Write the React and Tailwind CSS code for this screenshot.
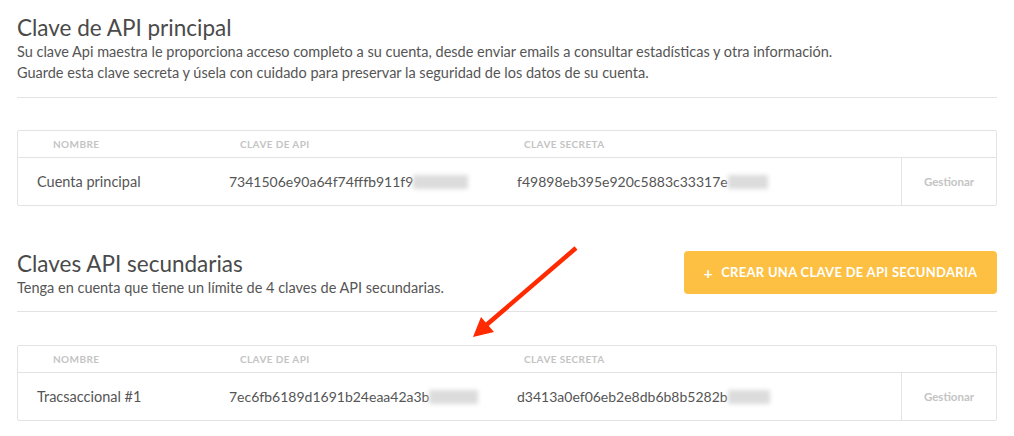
const FONT = "font-['Lato','Open_Sans',sans-serif]";

const Blur = ({ w }) => (
  <span className="inline-block h-[14px] bg-[#dcdcdc] blur-[2px] align-middle" style={{ width: w }} />
);

function KeyTable({ name, apiKey, apiBlur, secret, secretBlur }) {
  return (
    <div className="border border-[#e3e3e3] rounded-[2px]">
      <div className="grid grid-cols-[211px_288px_384px_1fr] h-[27px] items-center border-b border-[#e3e3e3] text-[10px] font-bold uppercase tracking-[0.4px] text-[#c4c4c4]">
        <div className="pl-[35px]">Nombre</div>
        <div className="pl-[11px]">Clave de API</div>
        <div className="pl-[7px]">Clave secreta</div>
        <div />
      </div>
      <div className="grid grid-cols-[211px_288px_384px_1fr] h-[47px] items-center text-[14.5px] text-[#555]">
        <div className="pl-[19px]">{name}</div>
        <div className="flex items-center text-[14px]">
          <span>{apiKey}</span>
          <Blur w={apiBlur} />
        </div>
        <div className="flex items-center text-[14px]">
          <span>{secret}</span>
          <Blur w={secretBlur} />
        </div>
        <div className="h-full flex items-center justify-center border-l border-[#e3e3e3] text-[11.5px] font-bold text-[#c4c4c4]">
          Gestionar
        </div>
      </div>
    </div>
  );
}

export default function App() {
  return (
    <div className={`${FONT} bg-white w-[1014px] h-[436px] overflow-hidden relative`}>
      <div className="pl-[17px] w-[997px] pt-[15px]">
        {/* Principal */}
        <h1 className="text-[22.5px] leading-[26px] text-[#4a4a4a]">Clave de API principal</h1>
        <p className="text-[14.5px] leading-[21px] text-[#555]">
          Su clave Api maestra le proporciona acceso completo a su cuenta, desde enviar emails a consultar estadísticas y otra información.
          <br />
          Guarde esta clave secreta y úsela con cuidado para preservar la seguridad de los datos de su cuenta.
        </p>
        <div className="mt-[14px] border-t border-[#e3e3e3]" />
        <div className="mt-[32px]">
          <KeyTable
            name="Cuenta principal"
            apiKey="7341506e90a64f74fffb911f9"
            apiBlur={55}
            secret="f49898eb395e920c5883c33317e"
            secretBlur={40}
          />
        </div>

        {/* Secundarias */}
        <div className="mt-[45px] flex justify-between items-start">
          <div>
            <h2 className="text-[22.5px] leading-[26px] text-[#4a4a4a]">Claves API secundarias</h2>
            <p className="text-[14.5px] leading-[21px] text-[#555]">
              Tenga en cuenta que tiene un límite de 4 claves de API secundarias.
            </p>
          </div>
          <button className="w-[313px] h-[43px] rounded-[4px] bg-[#fec043] text-white text-[13px] font-bold tracking-[0.3px] flex items-center justify-center gap-[8px]">
            <span className="text-[16px] leading-none">+</span>
            <span>CREAR UNA CLAVE DE API SECUNDARIA</span>
          </button>
        </div>
        <div className="mt-[13px] border-t border-[#e3e3e3]" />
        <div className="mt-[33px]">
          <KeyTable
            name="Tracsaccional #1"
            apiKey="7ec6fb6189d1691b24eaa42a3b"
            apiBlur={49}
            secret="d3413a0ef06eb2e8db6b8b5282b"
            secretBlur={42}
          />
        </div>
      </div>

      {/* annotation arrow */}
      <svg className="absolute left-0 top-0 pointer-events-none" width="1014" height="436">
        <line x1="576" y1="248" x2="484" y2="327" stroke="#ff2a00" strokeWidth="4.5" />
        <polygon points="473,337 481,317 494,332" fill="#ff2a00" />
      </svg>
    </div>
  );
}
